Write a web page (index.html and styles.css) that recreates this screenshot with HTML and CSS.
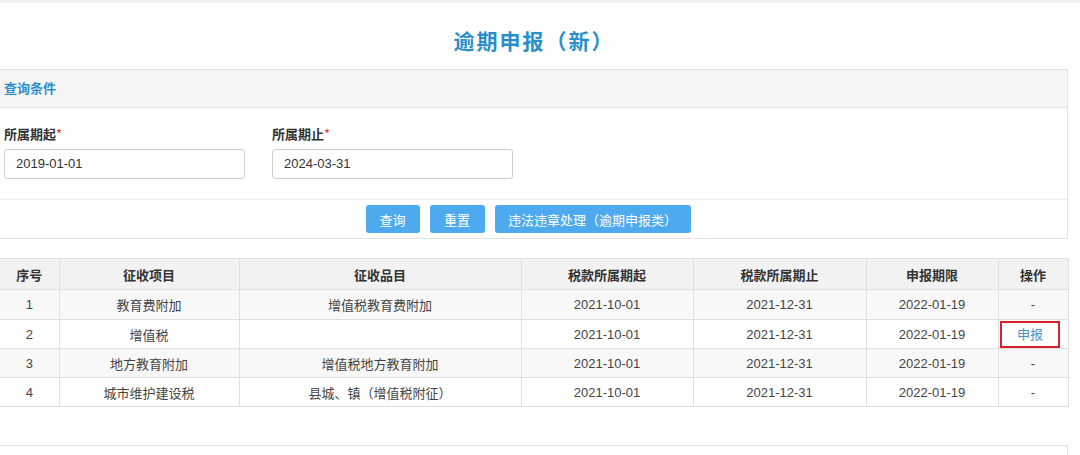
FILE: index.html
```html
<!DOCTYPE html>
<html lang="zh-CN">
<head>
<meta charset="utf-8">
<title>逾期申报（新）</title>
<link rel="stylesheet" href="styles.css">
</head>
<body>
<div class="topstrip"></div>
<div class="page">
  <h1 class="title">逾期申报（新）</h1>
  <div class="panel">
    <div class="panel-head">查询条件</div>
    <div class="form-row">
      <div class="field">
        <label class="label">所属期起<span class="req">*</span></label>
        <div class="input">2019-01-01</div>
      </div>
      <div class="field">
        <label class="label">所属期止<span class="req">*</span></label>
        <div class="input">2024-03-31</div>
      </div>
    </div>
    <div class="btn-row">
      <button class="btn btn-q">查询</button>
      <button class="btn btn-r">重置</button>
      <button class="btn btn-w">违法违章处理（逾期申报类）</button>
    </div>
  </div>
  <table class="grid">
    <colgroup>
      <col class="c1"><col class="c2"><col class="c3"><col class="c4"><col class="c5"><col class="c6"><col class="c7">
    </colgroup>
    <thead>
      <tr><th>序号</th><th>征收项目</th><th>征收品目</th><th>税款所属期起</th><th>税款所属期止</th><th>申报期限</th><th>操作</th></tr>
    </thead>
    <tbody>
      <tr class="odd first"><td>1</td><td>教育费附加</td><td>增值税教育费附加</td><td>2021-10-01</td><td>2021-12-31</td><td>2022-01-19</td><td>-</td></tr>
      <tr><td>2</td><td>增值税</td><td></td><td>2021-10-01</td><td>2021-12-31</td><td>2022-01-19</td><td class="op"><span class="mark">申报</span></td></tr>
      <tr class="odd"><td>3</td><td>地方教育附加</td><td>增值税地方教育附加</td><td>2021-10-01</td><td>2021-12-31</td><td>2022-01-19</td><td>-</td></tr>
      <tr><td>4</td><td>城市维护建设税</td><td>县城、镇（增值税附征）</td><td>2021-10-01</td><td>2021-12-31</td><td>2022-01-19</td><td>-</td></tr>
    </tbody>
  </table>
  <div class="panel panel-bottom"></div>
</div>
</body>
</html>
```

FILE: styles.css
```css
* { box-sizing: border-box; }
html, body { margin: 0; padding: 0; background: #fff; }
body {
  font-family: "Liberation Sans", "Noto Sans CJK SC", sans-serif;
  font-size: 13px;
  color: #333;
  overflow: hidden;
  height: 455px;
}
.topstrip { height: 3px; background: #f2f2f2; }
.page { width: 1068px; }
.title {
  margin: 0;
  height: 66px;
  padding-top: 23px;
  text-align: center;
  font-size: 21px;
  line-height: 28px;
  font-weight: bold;
  letter-spacing: 2px;
  color: #2a8ecb;
  font-family: "Noto Sans CJK SC", sans-serif;
}
.panel {
  border: 1px solid #e3e3e3;
  border-left: none;
  background: #fff;
}
.panel-head {
  height: 38px;
  line-height: 36px;
  background: #f5f5f5;
  border-bottom: 1px solid #e3e3e3;
  padding-left: 4px;
  font-weight: bold;
  color: #2a8ecb;
  font-family: "Noto Sans CJK SC", sans-serif;
  font-size: 13px;
}
.form-row {
  display: flex;
  gap: 27px;
  padding: 17px 0 20px 4px;
  border-bottom: 1px solid #eeeeee;
}
.field { display: flex; flex-direction: column; width: 241px; }
.label {
  font-weight: bold;
  font-size: 13px;
  line-height: 18px;
  height: 24px;
  color: #333;
  font-family: "Noto Sans CJK SC", sans-serif;
}
.req { color: #e0312f; font-weight: normal; }
.input {
  height: 30px;
  border: 1px solid #cfcfcf;
  border-radius: 3px;
  padding-left: 11px;
  line-height: 28px;
  font-size: 13px;
  color: #333;
}
.btn-row {
  display: flex;
  justify-content: center;
  gap: 10px;
  padding: 5px 11px 5px 0;
}
.btn {
  height: 28px;
  border: none;
  border-radius: 3px;
  background: #4eaaee;
  color: #fff;
  font-size: 13px;
  font-family: "Noto Sans CJK SC", sans-serif;
  padding: 0;
}
.btn-q { width: 54px; }
.btn-r { width: 55px; }
.btn-w { width: 196px; }
.grid {
  margin-top: 19px;
  width: 1068px;
  border-collapse: collapse;
  table-layout: fixed;
  font-size: 13px;
}
.c1 { width: 59px; }
.c2 { width: 180px; }
.c3 { width: 282px; }
.c4 { width: 172px; }
.c5 { width: 173px; }
.c6 { width: 132px; }
.c7 { width: 70px; }
.grid th, .grid td {
  border: 1px solid #e0e0e0;
  text-align: center;
  padding: 0;
}
.grid tr > :first-child { border-left: none; }
.grid th {
  height: 31px;
  background: #f2f2f2;
  font-weight: bold;
  color: #333;
  font-family: "Noto Sans CJK SC", sans-serif;
}
.grid td {
  height: 29px;
  color: #444;
}
.grid tr.first td { height: 30px; }
.grid tr.odd td { background: #f8f8f8; }
.mark {
  display: inline-block;
  width: 60px;
  height: 27px;
  line-height: 23px;
  border: 2px solid #d8202b;
  color: #4a8fc4;
  margin-left: -6px;
  margin-top: 1px;
}
.panel-bottom {
  margin-top: 38px;
  height: 40px;
}
```
